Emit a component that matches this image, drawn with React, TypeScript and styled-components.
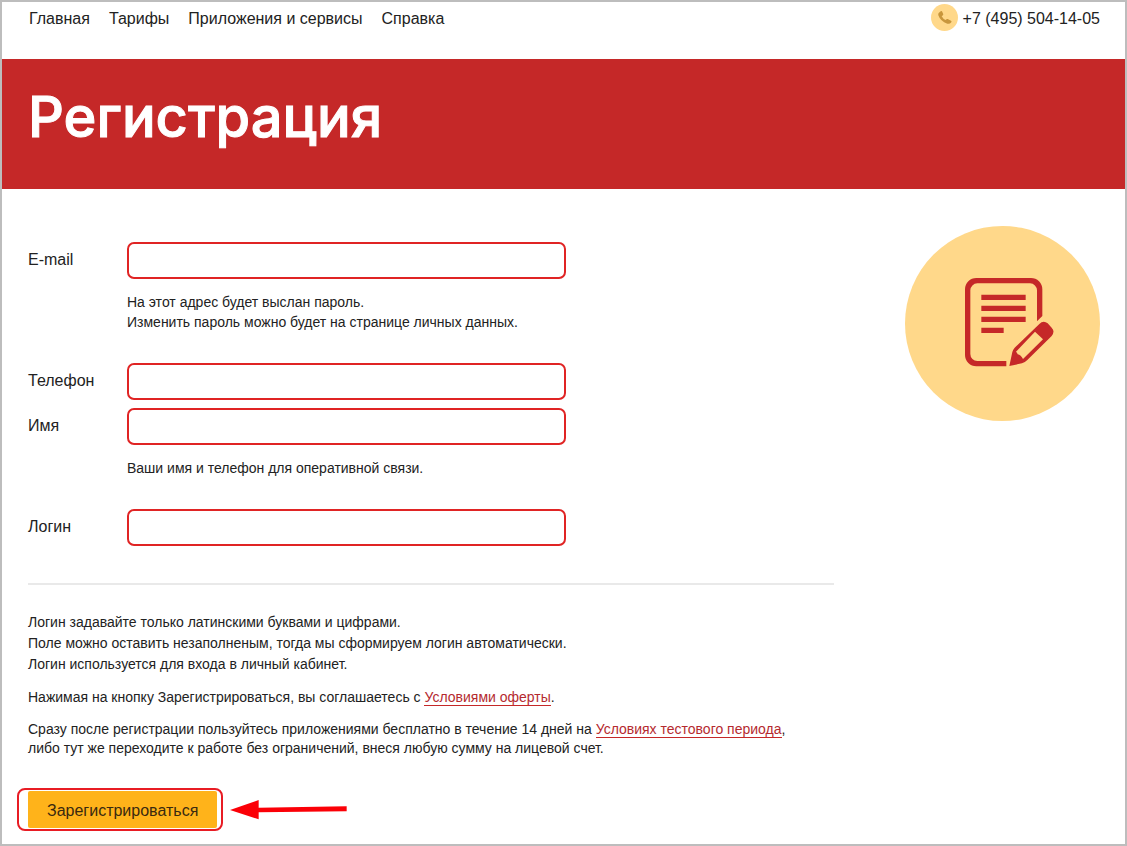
import React from "react";
import styled, { createGlobalStyle } from "styled-components";

const GlobalStyle = createGlobalStyle`
  *, *::before, *::after { box-sizing: border-box; }
  body {
    margin: 0;
    background: #fff;
    color: #222;
    font-family: "Liberation Sans", Arial, sans-serif;
    font-size: 14px;
  }
`;

const Page = styled.div`
  min-height: 100vh;
  border: 2px solid #bdbdbd;
`;

const Header = styled.header`
  display: flex;
  justify-content: space-between;
  align-items: flex-start;
  height: 57px;
  padding: 2px 25px 0 27px;
  font-size: 16px;
  line-height: 30px;
`;

const Nav = styled.nav`
  display: flex;
  gap: 19px;
`;

const NavLink = styled.a`
  color: #222;
  text-decoration: none;
`;

const Phone = styled.a`
  display: flex;
  align-items: flex-start;
  gap: 5px;
  color: #222;
  text-decoration: none;
`;

const Banner = styled.div`
  height: 130px;
  padding: 23px 26px;
  background: #c52828;
`;

const Title = styled.h1`
  margin: 0;
  color: #fff;
  font-family: Inter, "Noto Sans", sans-serif;
  font-size: 56px;
  font-weight: 500;
  line-height: 70px;
  -webkit-text-stroke: 1px #fff;
  stroke-linejoin: round;
`;

const Main = styled.main`
  display: flex;
  justify-content: space-between;
  align-items: flex-start;
  padding: 37px 25px 0 26px;
`;

const Form = styled.form`
  flex: 0 1 806px;
  padding-top: 16px;
`;

const Group = styled.div`
  display: grid;
  grid-template-columns: 99px minmax(0, 439px);
  row-gap: 8px;
  margin-bottom: 31px;
`;

const Label = styled.label`
  align-self: center;
  padding-bottom: 1px;
  font-size: 16px;
  line-height: 20px;
`;

const Input = styled.input`
  width: 100%;
  height: 37px;
  padding: 0 10px;
  border: 2px solid #e02424;
  border-radius: 7px;
  background: #fff;
  color: #222;
  font: inherit;
  font-size: 16px;
  outline: none;
`;

const Hint = styled.p`
  grid-column: 2;
  margin: 5px 0 0;
  line-height: 20px;
`;

const Divider = styled.hr`
  height: 2px;
  margin: 37px 0 27px;
  border: 0;
  background: #e9e9e9;
`;

const Note = styled.p<{ $loose?: boolean }>`
  margin: 0 0 13px;
  line-height: ${(p) => (p.$loose ? 21 : 19)}px;
`;

const TermsLink = styled.a`
  border-bottom: 1px solid #c52828;
  color: #b52a2f;
  text-decoration: none;
`;

const Actions = styled.div`
  display: flex;
  align-items: center;
  gap: 7px;
  margin: 30px 0 11px -11px;
`;

const Highlight = styled.div`
  padding: 1px 4px 1px 9px;
  border: 2px solid #e81c24;
  border-radius: 8px;
`;

const Submit = styled.button`
  display: block;
  height: 37px;
  padding: 2px 19px 0;
  border: 0;
  border-radius: 2px;
  background: #ffb31a;
  color: #3a2a10;
  font: inherit;
  font-size: 16px;
  cursor: pointer;
`;

const PhoneIcon = () => (
  <svg width="27" height="27" viewBox="90 12 81 81" aria-hidden="true">
    <circle cx="130.5" cy="52.5" r="40.5" fill="#ffd88a" />
    <path
      d="M113 39 L119 34 Q123 32 124 36 L127 43 Q127 46 122 49 Q126 57 134 60 Q137 56 140 57 L150 62 Q153 64 151 67 Q146 73 139 71 Q118 64 112 46 Q111 42 113 39Z"
      fill="#c8963c"
    />
  </svg>
);

const FormIcon = () => (
  <svg width="195" height="195" viewBox="45 47 585 585" aria-hidden="true">
    <circle cx="337.5" cy="339.5" r="292.5" fill="#ffd88a" />
    <g fill="#c52828">
      <path d="M349 468H259a34 34 0 0 1-34-34V237a34 34 0 0 1 34-34H423a34 34 0 0 1 34 34V317L441 333V240a21 21 0 0 0-21-21H262a21 21 0 0 0-21 21V431a21 21 0 0 0 21 21H349Z" />
      <path d="M274 253H407V269H274ZM274 286H407V302H274ZM274 319H407V335H274ZM274 352H341V368H274Z" />
      <path
        fillRule="evenodd"
        d="M358 467L367 425Q369 418 374 412L448 341Q460 329 473 339L485 352Q496 363 485 377L412 449Q405 456 396 459ZM435 364L378 424Q382 427 383 432Q393 434 399 446L459 387Z"
      />
    </g>
  </svg>
);

const Arrow = () => (
  <svg width="117" height="20" viewBox="692 89 351 60" aria-hidden="true">
    <path d="M692 119L778 89V112L1042 108V123L778 126V147Z" fill="#fb0007" />
  </svg>
);

export default function App() {
  return (
    <Page>
      <GlobalStyle />
      <Header>
        <Nav>
          <NavLink href="#home">Главная</NavLink>
          <NavLink href="#tariffs">Тарифы</NavLink>
          <NavLink href="#apps">Приложения и сервисы</NavLink>
          <NavLink href="#help">Справка</NavLink>
        </Nav>
        <Phone href="tel:+74955041405">
          <PhoneIcon />
          +7 (495) 504-14-05
        </Phone>
      </Header>
      <Banner>
        <Title>Регистрация</Title>
      </Banner>
      <Main>
        <Form onSubmit={(e) => e.preventDefault()}>
          <Group>
            <Label htmlFor="email">E-mail</Label>
            <Input id="email" type="email" />
            <Hint>
              На этот адрес будет выслан пароль.
              <br />
              Изменить пароль можно будет на странице личных данных.
            </Hint>
          </Group>
          <Group>
            <Label htmlFor="phone">Телефон</Label>
            <Input id="phone" type="tel" />
            <Label htmlFor="name">Имя</Label>
            <Input id="name" type="text" />
            <Hint>Ваши имя и телефон для оперативной связи.</Hint>
          </Group>
          <Group>
            <Label htmlFor="login">Логин</Label>
            <Input id="login" type="text" />
          </Group>
          <Divider />
          <Note $loose>
            Логин задавайте только латинскими буквами и цифрами.
            <br />
            Поле можно оставить незаполненым, тогда мы сформируем логин автоматически.
            <br />
            Логин используется для входа в личный кабинет.
          </Note>
          <Note>
            Нажимая на кнопку Зарегистрироваться, вы соглашаетесь с{" "}
            <TermsLink href="#offer">Условиями оферты</TermsLink>.
          </Note>
          <Note>
            Сразу после регистрации пользуйтесь приложениями бесплатно в течение 14 дней на{" "}
            <TermsLink href="#trial">Условиях тестового периода</TermsLink>,
            <br />
            либо тут же переходите к работе без ограничений, внеся любую сумму на лицевой счет.
          </Note>
          <Actions>
            <Highlight>
              <Submit type="submit">Зарегистрироваться</Submit>
            </Highlight>
            <Arrow />
          </Actions>
        </Form>
        <FormIcon />
      </Main>
    </Page>
  );
}
